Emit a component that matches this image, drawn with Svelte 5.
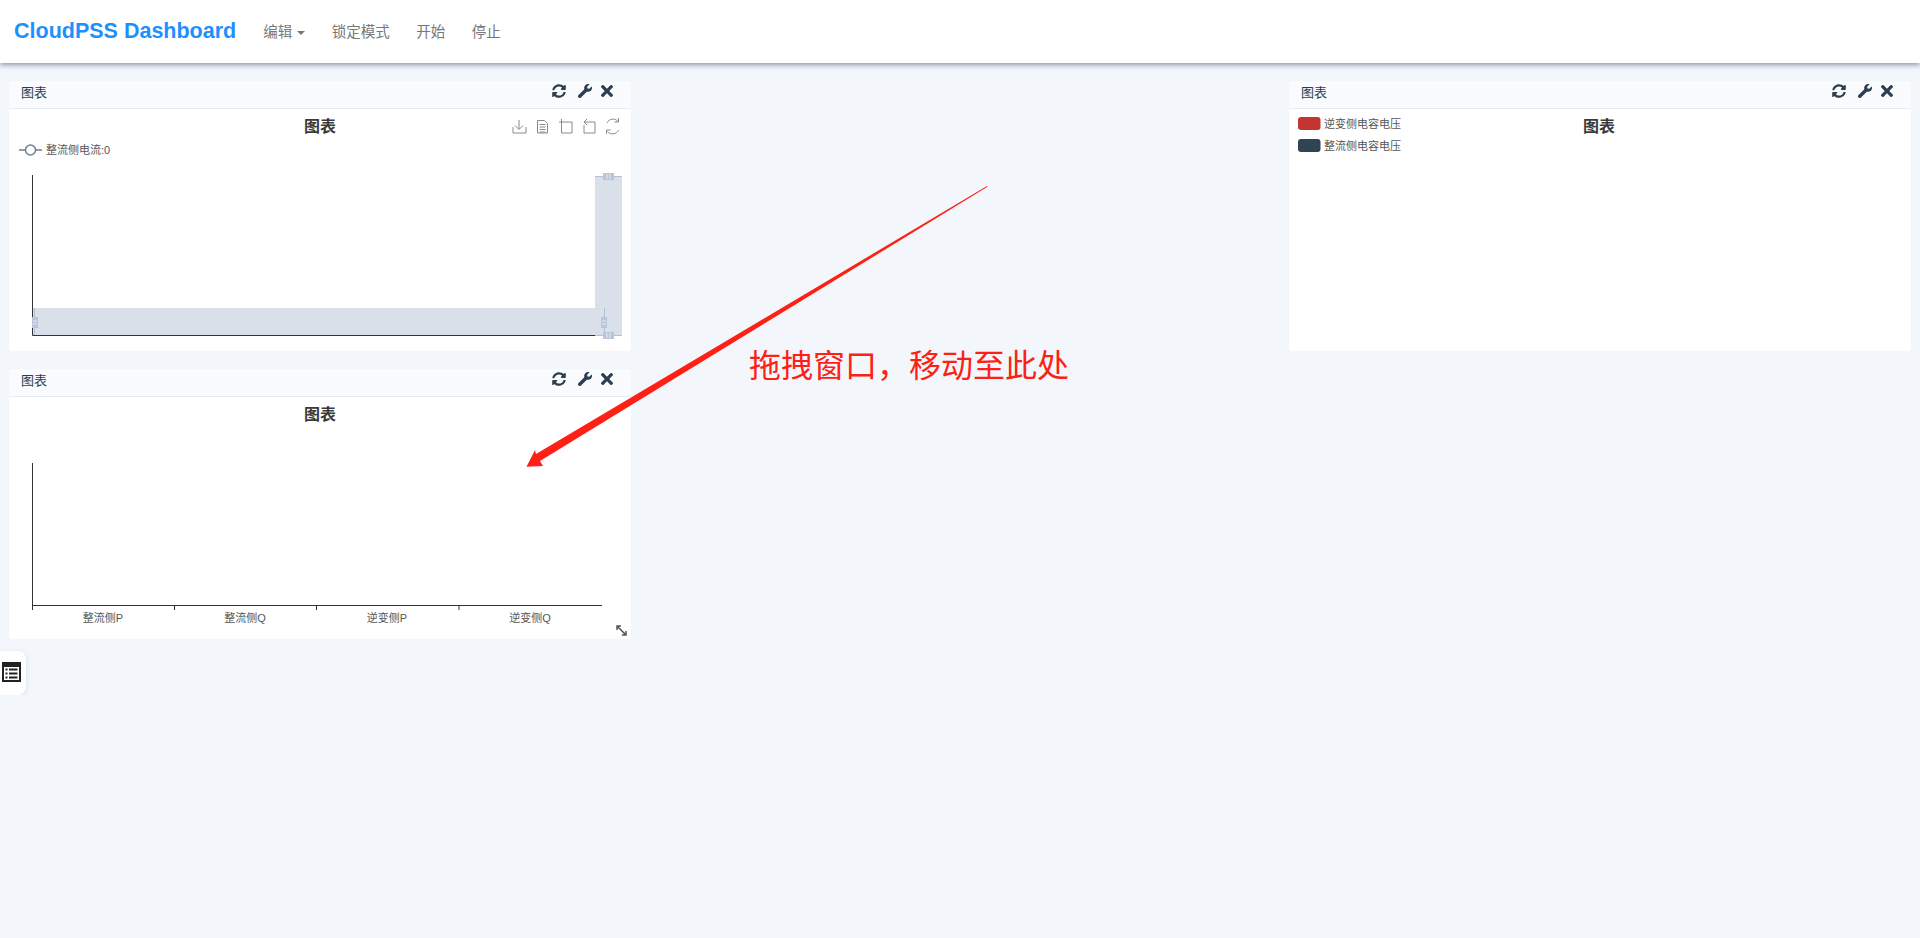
<script lang="ts">
  const navItems = ["锁定模式", "开始", "停止"];
  const barLabels = [
    { x: 103, text: "整流侧P" },
    { x: 245, text: "整流侧Q" },
    { x: 387, text: "逆变侧P" },
    { x: 530, text: "逆变侧Q" },
  ];
  const ticks = [32.5, 174.5, 316.5, 459];
</script>

{#snippet panelHeader()}
  <header class="panel-head">
    <span class="panel-name">图表</span>
    <div class="panel-tools">
      <svg class="tool refresh" width="14" height="14" viewBox="0 0 512 512"><path d="M370.72 133.28C339.458 104.008 298.888 87.962 255.848 88c-77.458.068-144.328 53.178-162.791 126.85-1.344 5.363-6.122 9.15-11.651 9.15H24.103c-7.498 0-13.194-6.807-11.807-14.176C33.933 94.924 134.813 8 256 8c66.448 0 126.791 26.136 171.315 68.685L463.03 40.97C478.149 25.851 504 36.559 504 57.941V192c0 13.255-10.745 24-24 24H345.941c-21.382 0-32.09-25.851-16.971-40.971l41.75-41.749zM32 296h134.059c21.382 0 32.09 25.851 16.971 40.971l-41.75 41.75c31.262 29.273 71.835 45.319 114.876 45.28 77.418-.07 144.315-53.144 162.787-126.849 1.344-5.363 6.122-9.15 11.651-9.15h57.304c7.498 0 13.194 6.807 11.807 14.176C478.067 417.076 377.187 504 256 504c-66.448 0-126.791-26.136-171.315-68.685L48.97 471.03C33.851 486.149 8 475.441 8 454.059V320c0-13.255 10.745-24 24-24z"/></svg>
      <svg class="tool" width="14" height="14" viewBox="0 0 512 512"><path d="M507.73 109.1c-2.24-9.03-13.54-12.09-20.12-5.51l-74.36 74.36-67.88-11.31-11.31-67.88 74.36-74.36c6.62-6.62 3.43-17.9-5.66-20.16-47.38-11.74-99.55.91-136.58 37.93-39.64 39.64-50.55 97.1-34.05 147.2L18.74 402.76c-24.99 24.99-24.99 65.51 0 90.5 24.99 24.99 65.51 24.99 90.5 0l213.21-213.21c50.12 16.71 107.47 5.68 147.37-34.22 37.07-37.07 49.7-89.32 37.91-136.73z"/></svg>
      <svg class="tool" width="12" height="12" viewBox="0 80 352 352"><path d="M242.72 256l100.07-100.07c12.28-12.28 12.28-32.19 0-44.48l-22.24-22.24c-12.28-12.28-32.19-12.28-44.48 0L176 189.28 75.93 89.21c-12.28-12.28-32.19-12.28-44.48 0L9.21 111.45c-12.28 12.28-12.28 32.19 0 44.48L109.28 256 9.21 356.07c-12.28 12.28-12.28 32.19 0 44.48l22.24 22.24c12.28 12.28 32.2 12.28 44.48 0L176 322.72l100.07 100.07c12.28 12.28 32.2 12.28 44.48 0l22.24-22.24c12.28-12.28 12.28-32.19 0-44.48L242.72 256z"/></svg>
    </div>
  </header>
{/snippet}

<nav class="navbar">
  <span class="brand">CloudPSS Dashboard</span>
  <ul class="nav-list">
    <li>编辑 <span class="caret"></span></li>
    {#each navItems as item}
      <li>{item}</li>
    {/each}
  </ul>
</nav>

<main class="board">
  <section class="panel col-1">
    {@render panelHeader()}
    <svg class="chart" viewBox="9 109 622 242">
      <text class="title" x="320" y="132">图表</text>

      <!-- toolbox -->
      <g class="toolbox">
        <path d="M519 120v9M515 125.5l4 4 4-4M513 127v6h13v-6" />
        <path d="M537.5 120.5h7l3 3v9.5h-10zM539.5 124.5h6M539.5 127h6M539.5 129.5h6M539.5 132h6" />
        <path d="M561.5 119v14h10.5v-11h-13" />
        <path d="M585 122h10v11h-11v-8M587 119l-3 3 3 3" />
        <path d="M607 123a6.5 6.5 0 0 1 11-1.5M618.5 118v4h-4M618.5 130a6.5 6.5 0 0 1-11 1.5M606.5 134v-4h4" />
      </g>

      <!-- legend -->
      <g class="legend-line">
        <path d="M19 150h23" />
        <circle cx="30.5" cy="150" r="5" />
      </g>
      <text class="small" x="46" y="154">整流侧电流:0</text>

      <!-- zoom bands -->
      <rect class="band" x="595" y="176" width="27" height="159.5" />
      <rect class="band" x="33" y="308" width="571" height="27" />

      <path class="axis" d="M32.5 175v160.5H604" />

      <path class="band-edge" d="M595 176.5h27M595 335.5h27M34.5 308v27M604.5 308v27" />
      <g class="handle">
        <rect x="603" y="173" width="11" height="7" />
        <rect x="603" y="332" width="11" height="7" />
        <rect x="32" y="317" width="6" height="11" />
        <rect x="601" y="317" width="6" height="11" />
      </g>
      <path class="handle-grip" d="M607 174v5M610 174v5M607 333v5M610 333v5M33 321h4M33 324h4M602 321h4M602 324h4" />
    </svg>
  </section>

  <section class="panel col-3">
    {@render panelHeader()}
    <svg class="chart" viewBox="1288 109 622 242">
      <text class="title" x="1598" y="132">图表</text>
      <rect x="1297" y="117" width="22.5" height="13" rx="3" fill="#c23531" />
      <text class="small" x="1323" y="128">逆变侧电容电压</text>
      <rect x="1297" y="139" width="22.5" height="13" rx="3" fill="#2f4554" />
      <text class="small" x="1323" y="150">整流侧电容电压</text>
    </svg>
  </section>

  <section class="panel col-1">
    {@render panelHeader()}
    <svg class="chart" viewBox="9 397 622 242">
      <text class="title" x="320" y="420">图表</text>
      <path class="axis" d="M32.5 463v142.5H602" />
      {#each ticks as x}
        <path class="axis" d="M{x} 605v5" />
      {/each}
      {#each barLabels as label}
        <text class="small centered" x={label.x} y="622">{label.text}</text>
      {/each}
      <path class="resize" d="M617 626l9 9M617 630v-4h4M626 631v4h-4" />
    </svg>
  </section>
</main>

<button class="side-btn" aria-label="列表">
  <svg width="19" height="20" viewBox="0 0 19 20">
    <rect width="19" height="20" fill="#222" />
    <rect x="2" y="5" width="15" height="13" fill="#fff" />
    <path d="M3.5 6.5h2v2h-2zM7 6.5h8.5v2H7zM3.5 10.5h2v2h-2zM7 10.5h8.5v2H7zM3.5 14.5h2v2h-2zM7 14.5h8.5v2H7z" fill="#222" />
  </svg>
</button>

<!-- drag hint drawn over the board -->
<svg class="hint-arrow" width="1920" height="938" viewBox="0 0 1920 938">
  <polygon points="987,186 987.5,186.8 540,461 543,466 526.5,466.7 535,450 536,454" fill="#fe2015" />
</svg>
<span class="hint-text">拖拽窗口，移动至此处</span>

<style>
  :global(body) {
    background: #f3f6fb;
    font-family: "Liberation Sans", "Noto Sans CJK SC", sans-serif;
  }

  .navbar {
    display: flex;
    align-items: center;
    height: 63px;
    padding-left: 14px;
    background: #fff;
    box-shadow: 0 2px 5px rgba(60, 75, 100, 0.55);
  }

  .brand {
    font-size: 21.5px;
    font-weight: 700;
    color: #1e8fff;
    margin-right: 27px;
  }

  .nav-list {
    display: flex;
    gap: 26.5px;
    list-style: none;
    margin: -3px 0 0;
    padding: 0;
    font-size: 14.5px;
    color: #777;
  }

  .caret {
    display: inline-block;
    width: 0;
    height: 0;
    margin-left: 1px;
    vertical-align: middle;
    border-top: 4px solid #777;
    border-left: 4px solid transparent;
    border-right: 4px solid transparent;
  }

  .board {
    display: grid;
    grid-template-columns: repeat(3, 1fr);
    grid-auto-rows: 270px;
    gap: 18px;
    padding: 18px 9px 12px;
  }

  .col-1 {
    grid-column: 1;
  }

  .col-3 {
    grid-column: 3;
    grid-row: 1;
  }

  .panel {
    display: flex;
    flex-direction: column;
    background: #fff;
    border-radius: 3px;
    overflow: hidden;
  }

  .panel-head {
    display: flex;
    align-items: center;
    justify-content: space-between;
    flex: none;
    height: 21px;
    padding: 0 18px 6px 12px;
    background: #f9fbfd;
    border-bottom: 1px solid #e3ebf6;
  }

  .panel-name {
    font-size: 13px;
    color: #2c3e50;
  }

  .panel-tools {
    display: flex;
    align-items: center;
    gap: 9px;
    margin-top: -2px;
  }

  .refresh {
    margin-right: 3px;
  }

  .tool {
    fill: #2c3e50;
  }

  .chart {
    display: block;
    flex: 1;
    min-height: 0;
    width: 100%;
  }

  .title {
    font-size: 16px;
    font-weight: 700;
    fill: #3a3a3a;
    text-anchor: middle;
  }

  .small {
    font-size: 11px;
    fill: #555;
  }

  .centered {
    text-anchor: middle;
  }

  .toolbox path {
    fill: none;
    stroke: #8a8a8a;
    stroke-width: 1;
  }

  .legend-line path {
    stroke: #6e7f8d;
    stroke-width: 1.5;
  }

  .legend-line circle {
    fill: #fff;
    stroke: #6e7f8d;
    stroke-width: 1.5;
  }

  .band {
    fill: #d9e0ea;
  }

  .band-edge {
    fill: none;
    stroke: #b4c0d4;
    stroke-width: 1;
  }

  .axis {
    fill: none;
    stroke: #333;
    stroke-width: 1;
  }

  .handle rect {
    fill: #b9c6da;
  }

  .handle-grip {
    fill: none;
    stroke: #e6ebf2;
    stroke-width: 1;
  }

  .resize {
    fill: none;
    stroke: #555;
    stroke-width: 1.5;
  }

  .side-btn {
    display: flex;
    align-items: center;
    width: 26px;
    height: 44px;
    padding: 0 0 3px 2px;
    border: none;
    background: #fff;
    border-radius: 0 8px 8px 0;
    box-shadow: 0 1px 4px rgba(60, 75, 100, 0.15);
  }

  .hint-arrow {
    position: absolute;
    top: 0;
    left: 0;
    pointer-events: none;
  }

  .hint-text {
    position: absolute;
    top: 340px;
    left: 749px;
    font-family: "Noto Sans CJK SC", sans-serif;
    font-size: 32px;
    line-height: 46px;
    color: #fe2015;
    white-space: nowrap;
  }
</style>
